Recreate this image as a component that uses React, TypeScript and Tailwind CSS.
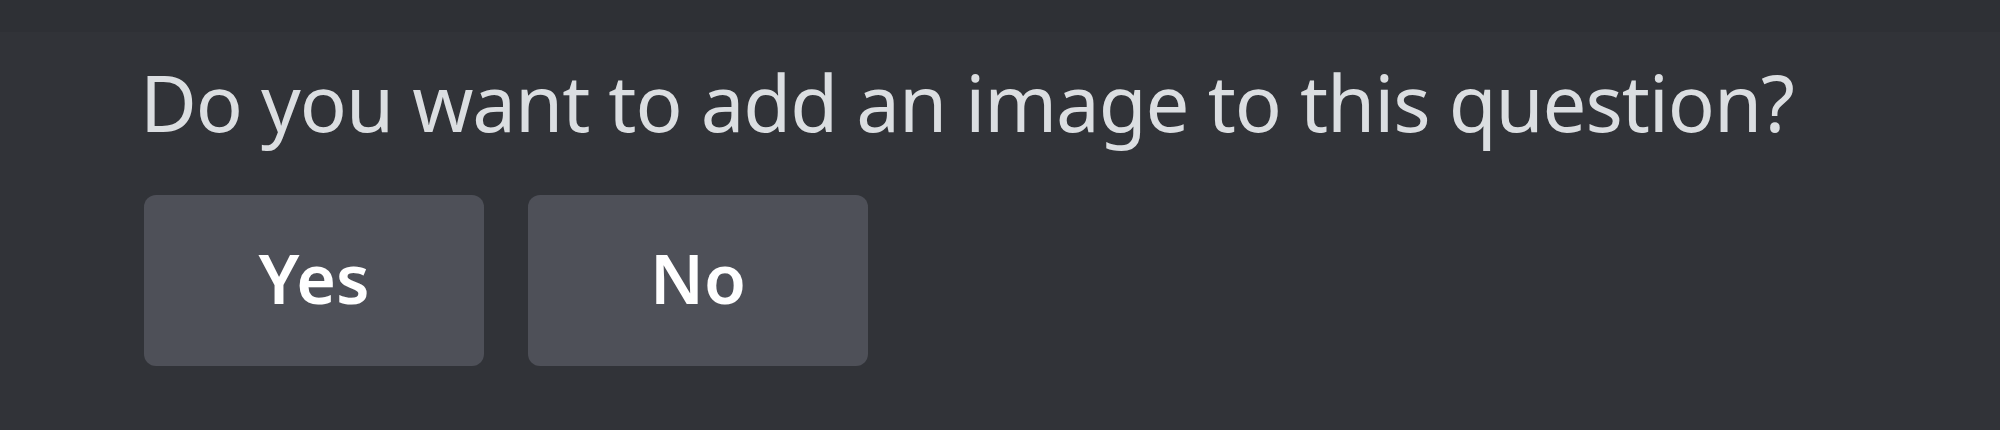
export default function App() {
  return (
    <div className="h-[430px] w-[2000px] bg-[#313338] font-['Noto_Sans',sans-serif]">
      <div className="h-[32px] bg-[#2e3035]" />
      <div className="pl-[144px] pt-[22px]">
        <p className="-ml-[4px] text-[78px] leading-[96px] tracking-[-1.1px] text-[#dbdee1]">
          Do you want to add an image to this question?
        </p>
        <div className="mt-[45px] flex gap-[44px]">
          <button className="h-[171px] w-[340px] rounded-[12px] bg-[#4e5058] pb-[6px] text-[68px] font-semibold text-white">
            Yes
          </button>
          <button className="h-[171px] w-[340px] rounded-[12px] bg-[#4e5058] pb-[6px] text-[68px] font-semibold text-white">
            No
          </button>
        </div>
      </div>
    </div>
  );
}
